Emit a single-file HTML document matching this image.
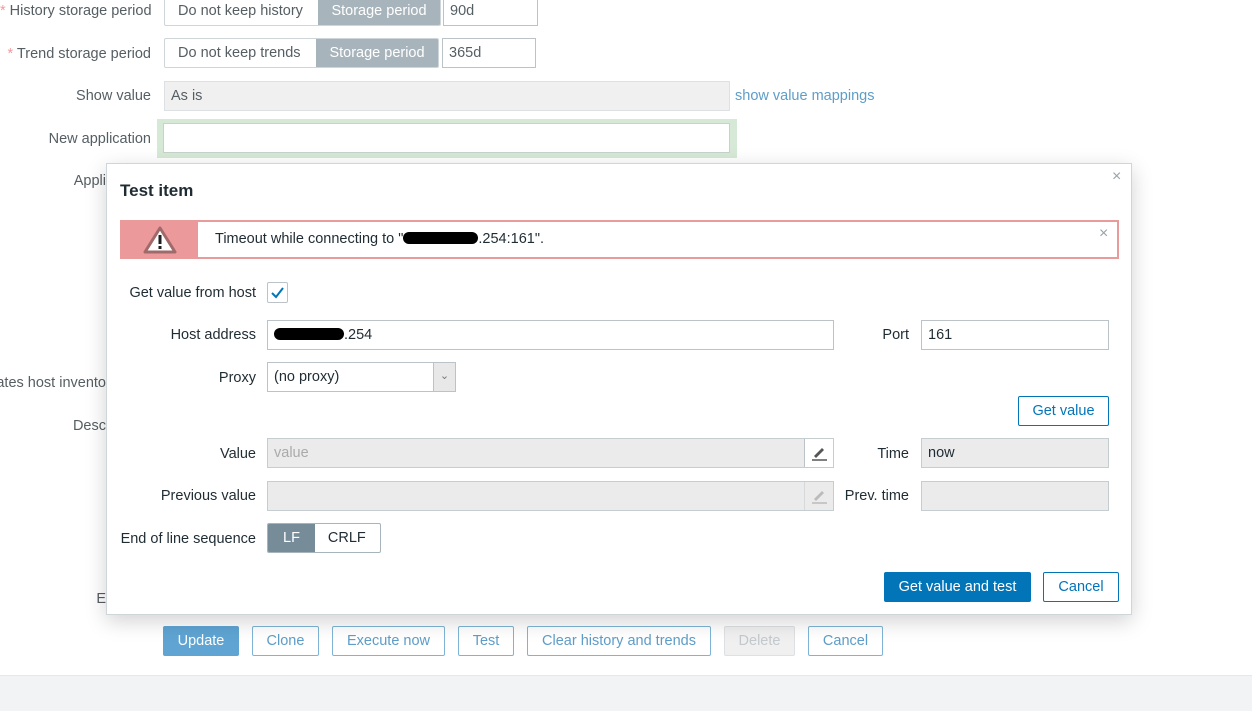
<!DOCTYPE html>
<html><head><style>
*{box-sizing:border-box}
body{margin:0;width:1252px;height:711px;position:relative;overflow:hidden;background:#fff;font-family:"Liberation Sans",Arial,sans-serif;font-size:14.5px;color:#1f2c33}
.a{position:absolute}
.lbl{position:absolute;text-align:right;color:#555e63;line-height:18px;white-space:nowrap}
.dl{position:absolute;text-align:right;color:#1f2c33;line-height:18px;white-space:nowrap}
.inp{position:absolute;border:1px solid #bbc3c8;background:#fff;padding:0 6px;line-height:28px;height:30px;white-space:nowrap}
.dis{background:#ebebeb;border-color:#c5cdd1}
.btn{position:absolute;height:30px;border:1px solid #0275b8;color:#0275b8;background:#fff;border-radius:2px;text-align:center;line-height:28px;white-space:nowrap}
.pb{border-color:#7fb4d6;color:#5e9dc8}
.seg{position:absolute;height:30px;border:1px solid #cfd6da;border-radius:2px;display:flex;line-height:28px;overflow:hidden;color:#555e63;white-space:nowrap}
.seg span{padding:0 13px}
.seg .on{background:#a7b4bc;color:#fff;text-align:center}
.red{color:#e45959}
</style></head><body>
<div class="lbl" style="left:0;top:2px;width:151px">
<span class="red" style="opacity:.6">*</span> History storage period</div>
<div class="seg" style="left:164px;top:-4px;width:277px;height:30px"><span style="width:153px;padding:0 0 0 13px">Do not keep history</span><span class="on" style="flex:1">Storage period</span></div>
<div class="inp" style="left:443px;top:-4px;width:95px;color:#555e63">90d</div>
<div class="lbl" style="left:0;top:45px;width:151px"><span class="red" style="opacity:.6">*</span> Trend storage period</div>
<div class="seg" style="left:164px;top:38px;width:275px"><span style="width:151px;padding:0 0 0 13px">Do not keep trends</span><span class="on" style="flex:1">Storage period</span></div>
<div class="inp" style="left:442px;top:38px;width:94px;color:#555e63">365d</div>
<div class="lbl" style="left:0;top:87px;width:151px">Show value</div>
<div class="inp dis" style="left:164px;top:81px;width:566px;background:#f0f0f0;border-color:#dde1e3;color:#555e63">As is</div>
<div class="a" style="left:735px;top:87px;color:#5e9dc8;line-height:18px">show value mappings</div>
<div class="lbl" style="left:0;top:130px;width:151px">New application</div>
<div class="a" style="left:157px;top:119px;width:580px;height:39px;background:#d6e8d6"></div>
<div class="inp" style="left:163px;top:123px;width:567px;border-color:#c5d3cb"></div>
<div class="lbl" style="left:0;top:172px;width:106px;color:#555e63;overflow:hidden;direction:rtl">Appli</div>
<div class="lbl" style="left:0;top:374px;width:106px;overflow:hidden;direction:rtl">ates host invento</div>
<div class="lbl" style="left:0;top:417px;width:106px">Desc</div>
<div class="lbl" style="left:0;top:590px;width:106px">E</div>
<div class="btn" style="left:163px;top:626px;width:76px;background:#5fa4d3;border-color:#5fa4d3;color:#fff">Update</div>
<div class="btn pb" style="left:252px;top:626px;width:67px">Clone</div>
<div class="btn pb" style="left:332px;top:626px;width:113px">Execute now</div>
<div class="btn pb" style="left:458px;top:626px;width:56px">Test</div>
<div class="btn pb" style="left:527px;top:626px;width:184px">Clear history and trends</div>
<div class="btn" style="left:724px;top:626px;width:71px;background:#f0f0f0;border-color:#dde1e3;color:#c3c9cc">Delete</div>
<div class="btn pb" style="left:808px;top:626px;width:75px">Cancel</div>
<div class="a" style="left:0;top:675px;width:1252px;height:36px;background:#f2f3f4;border-top:1px solid #e6e8ea"></div>

<div class="a" style="left:106px;top:163px;width:1026px;height:452px;background:#fff;border:1px solid #cfd6da;box-shadow:0 6px 20px rgba(0,0,0,.18)">
<div class="a" style="left:1005px;top:4px;color:#9aa3a8;font-size:16px">×</div>
<div class="a" style="left:13px;top:17px;font-size:17px;font-weight:bold;color:#1f2c33">Test item</div>
<div class="a" style="left:13px;top:56px;width:999px;height:39px;border:2px solid #e99b9b;background:#fff">
 <div class="a" style="left:0;top:0;width:76px;height:35px;background:#eb999a"></div>
 <svg class="a" style="left:20px;top:3px" width="36" height="30" viewBox="0 0 36 30"><path d="M18 3 L33 27 L3 27 Z" fill="#fff" stroke="#a06a6b" stroke-width="3" stroke-linejoin="round"/><rect x="16.5" y="10" width="3" height="9" fill="#1f1f1f"/><rect x="16.5" y="21" width="3" height="3" fill="#1f1f1f"/></svg>
 <div class="a" style="left:93px;top:8px;line-height:18px;white-space:nowrap">Timeout while connecting to "<span style="display:inline-block;width:75px;height:12px;background:#000;border-radius:6px;vertical-align:-1px"></span>.254:161".</div>
 <div class="a" style="left:977px;top:3px;color:#9aa3a8;font-size:16px">×</div>
</div>
<div class="dl" style="left:0;top:120px;width:149px">Get value from host</div>
<div class="a" style="left:160px;top:118px;width:21px;height:21px;border:1px solid #bbc3c8;border-radius:2px"><svg width="19" height="19"><path d="M4 10 L8 14 L15 5" fill="none" stroke="#0275b8" stroke-width="2"/></svg></div>
<div class="dl" style="left:0;top:162px;width:149px">Host address</div>
<div class="inp" style="left:160px;top:156px;width:567px"><span style="display:inline-block;width:70px;height:12px;background:#000;border-radius:6px;vertical-align:-1px"></span>.254</div>
<div class="dl" style="left:700px;top:162px;width:102px">Port</div>
<div class="inp" style="left:814px;top:156px;width:188px">161</div>
<div class="dl" style="left:0;top:205px;width:149px">Proxy</div>
<div class="inp" style="left:160px;top:198px;width:189px">(no proxy)</div>
<div class="a" style="left:326px;top:199px;width:22px;height:28px;background:#e8e8e8;border-left:1px solid #bbc3c8;text-align:center;color:#777;font-size:11px;line-height:26px">&#8964;</div>
<div class="btn" style="left:911px;top:232px;width:91px">Get value</div>
<div class="dl" style="left:0;top:281px;width:149px">Value</div>
<div class="inp dis" style="left:160px;top:274px;width:567px;color:#aaa">value</div>
<div class="a" style="left:697px;top:275px;width:29px;height:28px;background:#fff;border-left:1px solid #bbc3c8"><svg width="29" height="28"><path d="M9 17 L17 9 L19 11 L11 19 Z" fill="#555"/><path d="M7 21 H22" stroke="#555" stroke-width="1.5"/></svg></div>
<div class="dl" style="left:700px;top:281px;width:102px">Time</div>
<div class="inp dis" style="left:814px;top:274px;width:188px">now</div>
<div class="dl" style="left:0;top:323px;width:149px">Previous value</div>
<div class="inp dis" style="left:160px;top:317px;width:567px"></div>
<div class="a" style="left:697px;top:318px;width:29px;height:28px;border-left:1px solid #d5d9db"><svg width="29" height="28"><path d="M9 17 L17 9 L19 11 L11 19 Z" fill="#bbb"/><path d="M7 21 H22" stroke="#bbb" stroke-width="1.5"/></svg></div>
<div class="dl" style="left:700px;top:323px;width:102px">Prev. time</div>
<div class="inp dis" style="left:814px;top:317px;width:188px"></div>
<div class="dl" style="left:0;top:366px;width:149px">End of line sequence</div>
<div class="seg" style="left:160px;top:359px;width:114px;border-color:#a7b4bc;color:#1f2c33"><span style="background:#768d99;color:#fff;padding:0 15px">LF</span><span>CRLF</span></div>
<div class="btn" style="left:777px;top:408px;width:147px;background:#0275b8;color:#fff">Get value and test</div>
<div class="btn" style="left:936px;top:408px;width:76px">Cancel</div>
</div>
</body></html>
